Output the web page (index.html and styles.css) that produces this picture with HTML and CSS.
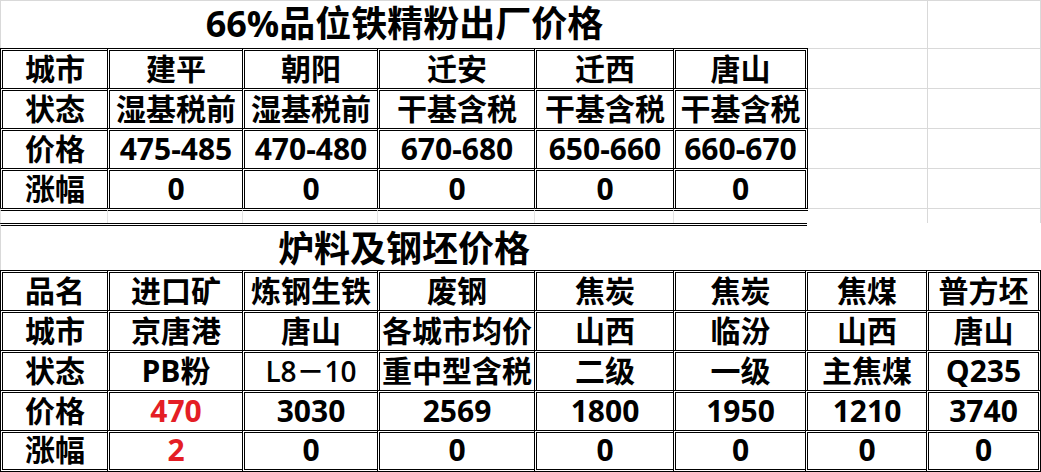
FILE: index.html
```html
<!DOCTYPE html>
<html lang="zh-CN">
<head>
<meta charset="utf-8">
<title>66%品位铁精粉出厂价格</title>
<link rel="stylesheet" href="styles.css">
</head>
<body>
<div class="sheet">
  <div class="upper">
    <div class="title">66%品位铁精粉出厂价格</div>
    <div class="gl"></div><div class="gl"></div>

    <div class="c">城市</div><div class="c">建平</div><div class="c">朝阳</div><div class="c">迁安</div><div class="c">迁西</div><div class="c end">唐山</div>
    <div class="gl"></div><div class="gl"></div>

    <div class="c">状态</div><div class="c">湿基税前</div><div class="c">湿基税前</div><div class="c">干基含税</div><div class="c">干基含税</div><div class="c end">干基含税</div>
    <div class="gl"></div><div class="gl"></div>

    <div class="c">价格</div><div class="c">475-485</div><div class="c">470-480</div><div class="c">670-680</div><div class="c">650-660</div><div class="c end">660-670</div>
    <div class="gl"></div><div class="gl"></div>

    <div class="c">涨幅</div><div class="c">0</div><div class="c">0</div><div class="c">0</div><div class="c">0</div><div class="c end">0</div>
    <div class="gl"></div><div class="gl"></div>

    <div class="gap"></div><div class="gap"></div><div class="gap"></div><div class="gap"></div><div class="gap"></div><div class="gap"></div>
    <div class="gl"></div><div class="gl"></div>
  </div>

  <div class="title-row">
    <div class="title2">炉料及钢坯价格</div>
  </div>

  <div class="lower">
    <div class="c">品名</div><div class="c">进口矿</div><div class="c">炼钢生铁</div><div class="c">废钢</div><div class="c">焦炭</div><div class="c">焦炭</div><div class="c">焦煤</div><div class="c end">普方坯</div>

    <div class="c">城市</div><div class="c">京唐港</div><div class="c">唐山</div><div class="c">各城市均价</div><div class="c">山西</div><div class="c">临汾</div><div class="c">山西</div><div class="c end">唐山</div>

    <div class="c">状态</div><div class="c">PB粉</div><div class="c light">L8－10</div><div class="c">重中型含税</div><div class="c">二级</div><div class="c">一级</div><div class="c">主焦煤</div><div class="c end">Q235</div>

    <div class="c">价格</div><div class="c red">470</div><div class="c">3030</div><div class="c">2569</div><div class="c">1800</div><div class="c">1950</div><div class="c">1210</div><div class="c end">3740</div>

    <div class="c last">涨幅</div><div class="c last red">2</div><div class="c last">0</div><div class="c last">0</div><div class="c last">0</div><div class="c last">0</div><div class="c last">0</div><div class="c last end">0</div>
  </div>
</div>
</body>
</html>
```

FILE: styles.css
```css
* {
  box-sizing: border-box;
  margin: 0;
  padding: 0;
}

html, body {
  background: #ffffff;
}

body {
  margin: 0;
  width: 1041px;
  height: 472px;
  overflow: hidden;
  font-family: "Open Sans", "Noto Sans CJK SC", sans-serif;
  color: #000000;
}

.sheet {
  display: flex;
  flex-direction: column;
}

.upper {
  display: grid;
  grid-template-columns: 107px 135px 135px 157px 139px 135px 120px 113px;
  grid-template-rows: 48px 40px 40px 40px 40px 15px;
}

.lower {
  display: grid;
  grid-template-columns: 107px 135px 135px 157px 139px 132px 121px 115px;
  grid-template-rows: 40px 40px 40px 40px 42px;
}

.title {
  grid-column: span 6;
  border-top: 1px solid #d9d9d9;
  border-left: 1px solid #d9d9d9;
  display: flex;
  align-items: center;
  justify-content: center;
  font-size: 36px;
  font-weight: 700;
  line-height: 1;
  padding-bottom: 2px;
}

.gl {
  border-top: 1px solid #d9d9d9;
  border-right: 1px solid #d9d9d9;
}

.c {
  border-top: 3px double #000000;
  border-left: 3px double #000000;
  display: flex;
  align-items: center;
  justify-content: center;
  font-size: 30px;
  font-weight: 700;
  line-height: 1;
  white-space: nowrap;
  padding-bottom: 2px;
}

.c.end {
  border-right: 3px double #000000;
}

.c.last {
  border-bottom: 3px double #000000;
}

.c.light {
  font-weight: 600;
  font-size: 28px;
}

.c.red {
  color: #e41e25;
}

.gap {
  border-top: 3px double #000000;
  border-left: 1px solid #e3e3e3;
}

.title-row {
  display: flex;
  height: 47px;
}

.title2 {
  width: 807px;
  border-top: 3px double #000000;
  border-left: 1px solid #d9d9d9;
  display: flex;
  align-items: center;
  justify-content: center;
  font-size: 36px;
  font-weight: 700;
  line-height: 1;
  padding-top: 2px;
}
```
